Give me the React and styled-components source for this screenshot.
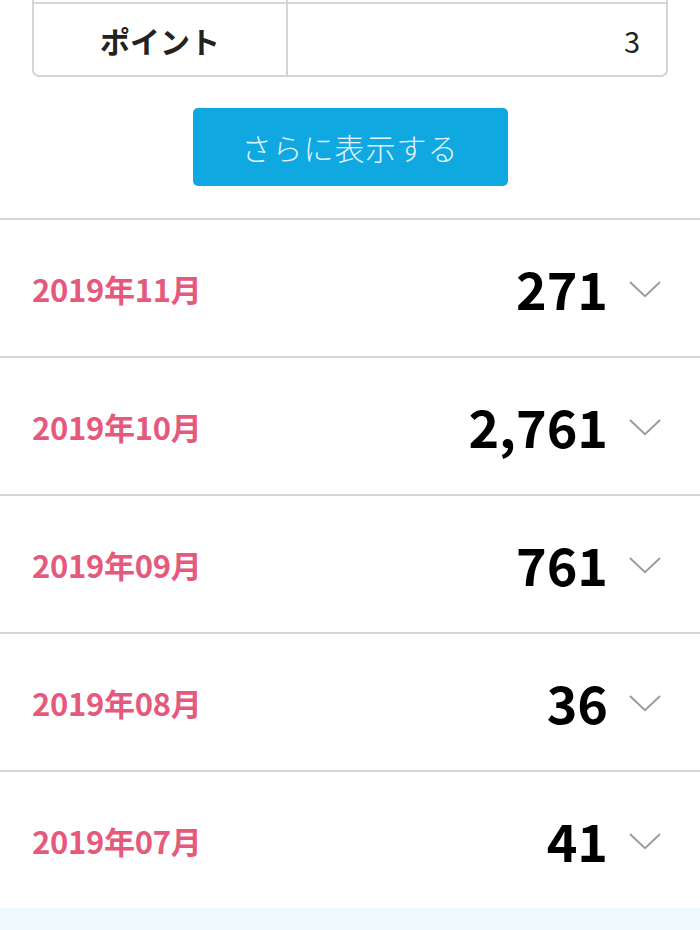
import styled, { createGlobalStyle } from "styled-components";

const GlobalStyle = createGlobalStyle`
  html, body {
    margin: 0;
    padding: 0;
    background: #eef9fd;
    font-family: "Noto Sans CJK JP", "Noto Sans", sans-serif;
  }
`;

const months = [
  { label: "2019年11月", value: "271" },
  { label: "2019年10月", value: "2,761" },
  { label: "2019年09月", value: "761" },
  { label: "2019年08月", value: "36" },
  { label: "2019年07月", value: "41" },
];

export default function App() {
  return (
    <>
      <GlobalStyle />
      <Page>
        <Top>
          <Table>
            <Row>
              <HeadCell />
              <ValueCell />
            </Row>
            <Row>
              <HeadCell>ポイント</HeadCell>
              <ValueCell>3</ValueCell>
            </Row>
          </Table>
          <MoreButton>さらに表示する</MoreButton>
        </Top>
        <List>
          {months.map((m) => (
            <Month key={m.label}>
              <DateLabel>{m.label}</DateLabel>
              <Right>
                <Count>{m.value}</Count>
                <Chevron viewBox="0 0 34 18">
                  <polyline points="1,1 17,16 33,1" />
                </Chevron>
              </Right>
            </Month>
          ))}
        </List>
      </Page>
    </>
  );
}

const Page = styled.div`
  background: #fff;
  box-shadow: 0 4px 10px rgba(0, 0, 0, 0.08);
  margin-top: -69px;
`;

const Top = styled.div`
  padding: 0 32px 32px;
  display: flex;
  flex-direction: column;
  align-items: center;
`;

const Table = styled.div`
  width: 100%;
  box-sizing: border-box;
  border: 2px solid #d4d4d4;
  border-top: none;
  border-radius: 0 0 7px 7px;
  margin-bottom: 31px;
`;

const Row = styled.div`
  display: grid;
  grid-template-columns: 254px 1fr;
  height: 71px;
  & + & {
    border-top: 2px solid #d4d4d4;
  }
`;

const HeadCell = styled.div`
  display: flex;
  align-items: center;
  justify-content: center;
  border-right: 2px solid #d4d4d4;
  font-size: 30px;
  font-weight: 700;
  color: #222;
`;

const ValueCell = styled.div`
  display: flex;
  align-items: center;
  justify-content: flex-end;
  padding-right: 26px;
  font-size: 29px;
  color: #222;
`;

const MoreButton = styled.button`
  width: 315px;
  height: 78px;
  border: none;
  border-radius: 5px;
  background: #0fa8e0;
  color: rgba(255, 255, 255, 0.9);
  font-family: "Noto Sans CJK JP", sans-serif;
  font-size: 30px;
  font-weight: 300;
  letter-spacing: 1px;
  cursor: pointer;
`;

const List = styled.div`
  border-top: 2px solid #d4d4d4;
`;

const Month = styled.div`
  display: flex;
  align-items: center;
  justify-content: space-between;
  height: 136px;
  padding: 0 39px 0 32px;
  & + & {
    border-top: 2px solid #d4d4d4;
  }
`;

const DateLabel = styled.div`
  font-size: 31px;
  font-weight: 700;
  color: #e55a7c;
  letter-spacing: -0.3px;
`;

const Right = styled.div`
  display: flex;
  align-items: center;
  gap: 21px;
`;

const Count = styled.div`
  font-size: 52px;
  font-weight: 700;
  color: #000;
  line-height: 1;
`;

const Chevron = styled.svg`
  width: 32px;
  height: 17px;
  fill: none;
  stroke: #9a9a9a;
  stroke-width: 2;
  margin-top: 2px;
`;
